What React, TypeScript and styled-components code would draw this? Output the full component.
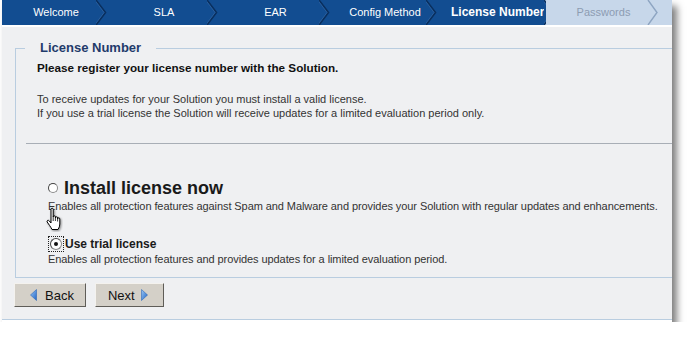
import React from "react";
import styled, { createGlobalStyle } from "styled-components";

const GlobalStyle = createGlobalStyle`
  body {
    margin: 0;
    background: #ffffff;
    font-family: "Liberation Sans", Arial, sans-serif;
  }
`;

type StepData = { label: string; width?: number; state: "done" | "active" | "todo" };

const STEPS: StepData[] = [
  { label: "Welcome", width: 105, state: "done" },
  { label: "SLA", width: 111, state: "done" },
  { label: "EAR", width: 112, state: "done" },
  { label: "Config Method", width: 107, state: "done" },
  { label: "License Number", width: 109, state: "active" },
  { label: "Passwords", width: 112, state: "todo" },
];

const DARK = "#124d91";
const LIGHT = "#c7d7ea";

const colorFor = (s?: StepData["state"]) => (s === "todo" || !s ? LIGHT : DARK);

const App = () => {
  return (
    <>
      <GlobalStyle />
      <Window>
        <StepBar>
          {STEPS.map((step, i) => (
            <Step key={step.label} $width={step.width} $bg={colorFor(step.state)}>
              <StepLabel $state={step.state}>{step.label}</StepLabel>
              <Chevron
                own={colorFor(step.state)}
                next={colorFor(STEPS[i + 1]?.state)}
                light={step.state === "todo"}
              />
            </Step>
          ))}
          <StepRest />
        </StepBar>

        <Content>
          <Group>
            <Legend>License Number</Legend>
            <Intro>Please register your license number with the Solution.</Intro>
            <Para>
              To receive updates for your Solution you must install a valid license.
              <br />
              If you use a trial license the Solution will receive updates for a limited
              evaluation period only.
            </Para>
            <Rule />
            <Option $top={33}>
              <OptionTitle $big>
                <Radio />
                Install license now
              </OptionTitle>
              <OptionText>
                Enables all protection features against Spam and Malware and provides your
                Solution with regular updates and enhancements.
              </OptionText>
              <HandCursor />
            </Option>
            <Option $top={23}>
              <OptionTitle>
                <Focus>
                  <Radio $checked />
                </Focus>
                Use trial license
              </OptionTitle>
              <OptionText>
                Enables all protection features and provides updates for a limited evaluation
                period.
              </OptionText>
            </Option>
          </Group>

          <Footer>
            <NavButton $dir="left">
              <Arrow dir="left" />
              Back
            </NavButton>
            <NavButton $dir="right">
              Next
              <Arrow dir="right" />
            </NavButton>
          </Footer>
        </Content>
      </Window>
    </>
  );
};

export default App;

const Chevron = ({ own, next, light }: { own: string; next: string; light?: boolean }) => (
  <ChevronSvg width="11" height="25" viewBox="0 0 11 25">
    <rect x="0" y="0" width="11" height="25" fill={next} />
    <polygon points="0,0 10,12.5 0,25" fill={own} />
    {light ? (
      <polyline points="1,0 10,12.5 1,25" fill="none" stroke="#8ea5c2" strokeWidth="1.4" />
    ) : (
      <>
        <polyline points="0,0 9.5,12.5 0,25" fill="none" stroke="#0a2f5e" strokeWidth="1.6" />
        <polyline points="-1.4,0 8,12.5 -1.4,25" fill="none" stroke="#2f62a0" strokeWidth="0.8" />
      </>
    )}
  </ChevronSvg>
);

const Arrow = ({ dir }: { dir: "left" | "right" }) => (
  <ArrowSvg width="7" height="12" viewBox="0 0 7 12">
    <defs>
      <linearGradient id={`ag-${dir}`} x1="0" y1="0" x2="1" y2="1">
        <stop offset="0" stopColor="#9cc8f5" />
        <stop offset="1" stopColor="#1d63c6" />
      </linearGradient>
    </defs>
    {dir === "left" ? (
      <polygon points="6.5,0.5 6.5,11.5 0.5,6" fill={`url(#ag-${dir})`} stroke="#2d68b8" strokeWidth="0.6" />
    ) : (
      <polygon points="0.5,0.5 0.5,11.5 6.5,6" fill={`url(#ag-${dir})`} stroke="#2d68b8" strokeWidth="0.6" />
    )}
  </ArrowSvg>
);

const HandCursor = () => (
  <HandSvg width="18" height="25" viewBox="0 0 18 25">
    <path
      d="M6 2.5 Q6 1.2 7.1 1.2 Q8.2 1.2 8.2 2.5 V10 Q8.2 8.8 9.3 8.8 Q10.4 8.8 10.4 10 V11 Q10.4 9.8 11.5 9.8 Q12.6 9.8 12.6 11 V12 Q12.6 10.8 13.7 10.8 Q14.8 10.8 14.8 12 V17 Q14.8 20 13 22.5 H7 Q6 20.5 4.6 18.5 L2.2 15 Q1.6 13.9 2.6 13.4 Q3.6 13 4.3 14 L6 16 Z"
      fill="#ffffff"
      stroke="#000000"
      strokeWidth="1"
      strokeLinejoin="round"
      style={{ filter: "drop-shadow(1.5px 1.5px 1px rgba(0,0,0,0.45))" }}
    />
    <path d="M8.2 10 V14 M10.4 11 V14 M12.6 12 V14.5" stroke="#000" strokeWidth="0.8" />
  </HandSvg>
);

const Window = styled.div`
  width: 670px;
  margin-left: 2px;
  background: #ffffff;
  padding-bottom: 2px;
  box-shadow: 5px 6px 7px rgba(0, 0, 0, 0.5);
`;

const StepBar = styled.div`
  display: flex;
  height: 25px;
  background: ${LIGHT};
`;

const Step = styled.div<{ $width?: number; $bg: string }>`
  display: flex;
  width: ${(p) => p.$width}px;
  height: 25px;
  background: ${(p) => p.$bg};
`;

const StepRest = styled.div`
  flex: 1;
  background: ${LIGHT};
`;

const StepLabel = styled.div<{ $state: StepData["state"] }>`
  flex: 1;
  padding-left: 14px;
  text-align: center;
  line-height: 25px;
  font-size: ${(p) => (p.$state === "active" ? "12px" : "11px")};
  font-weight: ${(p) => (p.$state === "active" ? 700 : 400)};
  color: ${(p) => (p.$state === "todo" ? "#8d9cb2" : "#ffffff")};
  white-space: nowrap;
`;

const ChevronSvg = styled.svg`
  display: block;
  flex: none;
`;

const Content = styled.div`
  background: #eff0f2;
  border-top: 2px solid #ffffff;
  border-bottom: 1px solid #b9cde0;
  padding-left: 13px;
`;

const Group = styled.fieldset`
  margin: 13px 0 0 0;
  padding: 0 0 11px 21px;
  border: 1px solid #b9cde0;
  border-right: none;
  min-width: 0;
`;

const Legend = styled.legend`
  margin-left: -12px;
  padding: 0 15px;
  font-size: 13px;
  line-height: 16px;
  font-weight: 700;
  color: #1f3b6b;
`;

const Intro = styled.div`
  padding-top: 5px;
  font-size: 11.7px;
  line-height: 14px;
  font-weight: 700;
  color: #111111;
`;

const Para = styled.div`
  margin-top: 17px;
  font-size: 11px;
  line-height: 14px;
  color: #333333;
`;

const Rule = styled.div`
  margin: 23px 0 0 -11px;
  border-top: 1px solid #a8aeb6;
`;

const Option = styled.div<{ $top: number }>`
  position: relative;
  margin-top: ${(p) => p.$top}px;
  padding-left: 11px;
`;

const OptionTitle = styled.div<{ $big?: boolean }>`
  display: flex;
  align-items: center;
  gap: ${(p) => (p.$big ? "6px" : "1px")};
  height: ${(p) => (p.$big ? "22px" : "16px")};
  font-size: ${(p) => (p.$big ? "18px" : "12px")};
  font-weight: 700;
  color: #1a1a1a;
`;

const OptionText = styled.div`
  font-size: 11px;
  line-height: 14px;
  letter-spacing: -0.08px;
  color: #333333;
  white-space: nowrap;
`;

const Radio = styled.span<{ $checked?: boolean }>`
  position: relative;
  display: inline-block;
  width: ${(p) => (p.$checked ? "10px" : "8px")};
  height: ${(p) => (p.$checked ? "10px" : "8px")};
  border-radius: 50%;
  background: #ffffff;
  border: 1px solid #8a8a8a;
  border-top-color: #444;
  border-left-color: #444;
  flex: none;

  &::after {
    content: "";
    display: ${(p) => (p.$checked ? "block" : "none")};
    position: absolute;
    left: 3px;
    top: 3px;
    width: 4px;
    height: 4px;
    border-radius: 50%;
    background: #111;
  }
`;

const Focus = styled.span`
  display: inline-flex;
  padding: 1px;
  border: 1px dotted #222;
`;

const HandSvg = styled.svg`
  position: absolute;
  left: 8px;
  top: 30px;
`;

const Footer = styled.div`
  display: flex;
  gap: 9px;
  margin-left: -1px;
  padding: 5px 0 12px 0;
`;

const NavButton = styled.button<{ $dir: "left" | "right" }>`
  display: inline-flex;
  align-items: center;
  gap: ${(p) => (p.$dir === "left" ? "8px" : "6px")};
  height: 24px;
  padding: ${(p) => (p.$dir === "left" ? "0 11px 0 15px" : "0 15px 0 12px")};
  background: #d4d0c8;
  border: 1px solid;
  border-color: #f4f2ee #5f5d58 #5f5d58 #f4f2ee;
  font-family: "Liberation Sans", Arial, sans-serif;
  font-size: 13px;
  color: #111111;
  cursor: pointer;
`;

const ArrowSvg = styled.svg`
  display: block;
`;
